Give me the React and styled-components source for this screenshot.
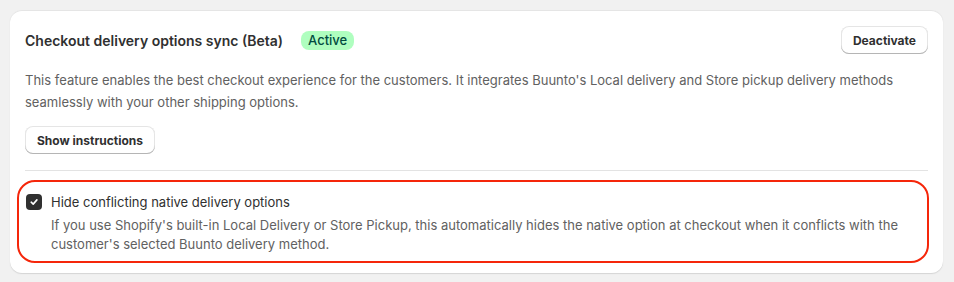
import styled, { createGlobalStyle } from "styled-components";

const GlobalStyle = createGlobalStyle`
  html, body {
    margin: 0;
    padding: 0;
    background: #f1f1f1;
    font-family: Inter, "Noto Sans", "Liberation Sans", sans-serif;
    -webkit-font-smoothing: antialiased;
  }
`;

const Page = styled.div`
  padding: 10px 11px 10px 10px;
`;

const Card = styled.div`
  background: #ffffff;
  border-radius: 12px;
  padding: 16px 15px 10px 15px;
  box-shadow: 0 1px 0 0 rgba(26, 26, 26, 0.07), 0 1px 2px rgba(0, 0, 0, 0.06),
    inset 0 1px 0 0 rgba(204, 204, 204, 0.5);
`;

const Header = styled.div`
  display: flex;
  align-items: center;
  justify-content: space-between;
`;

const TitleGroup = styled.div`
  display: flex;
  align-items: center;
  gap: 18px;
`;

const Title = styled.h2`
  margin: 0;
  font-size: 14px;
  font-weight: 600;
  color: #303030;
`;

const Badge = styled.span`
  display: inline-flex;
  align-items: center;
  height: 19px;
  padding: 0 7px;
  border-radius: 8px;
  background: #affebf;
  color: #014b40;
  font-size: 13px;
  font-weight: 450;
`;

const Button = styled.button`
  height: 28px;
  padding: 0 12px;
  border: none;
  border-radius: 8px;
  background: #ffffff;
  color: #303030;
  font-family: inherit;
  font-size: 12px;
  font-weight: 650;
  cursor: pointer;
  box-shadow: inset 0 -1px 0 0 #b5b5b5, inset 0 0 0 1px rgba(0, 0, 0, 0.1),
    inset 0 0.5px 0 1.5px #fff;
`;

const Description = styled.p`
  margin: 15px 0 13px;
  font-size: 13px;
  line-height: 22px;
  color: #616161;
`;

const Divider = styled.hr`
  margin: 16px 0 9px;
  border: none;
  border-top: 1px solid #e3e3e3;
`;

const Highlight = styled.div`
  margin: 0 -1px 0 -8px;
  padding: 11px 16px 7px 7px;
  border: 2px solid #f5260a;
  border-radius: 18px;
`;

const OptionRow = styled.label`
  display: grid;
  grid-template-columns: 16px 1fr;
  column-gap: 9px;
  align-items: center;
`;

const Box = styled.span`
  width: 16px;
  height: 16px;
  border-radius: 4px;
  background: #303030;
  display: flex;
  align-items: center;
  justify-content: center;
`;

const OptionLabel = styled.span`
  font-size: 13px;
  line-height: 18px;
  color: #303030;
`;

const HelpText = styled.p`
  grid-column: 2;
  margin: 5px 0 0;
  font-size: 13px;
  line-height: 19px;
  color: #616161;
`;

export default function App() {
  return (
    <>
      <GlobalStyle />
      <Page>
        <Card>
          <Header>
            <TitleGroup>
              <Title>Checkout delivery options sync (Beta)</Title>
              <Badge>Active</Badge>
            </TitleGroup>
            <Button>Deactivate</Button>
          </Header>
          <Description>
            This feature enables the best checkout experience for the customers. It integrates
            Buunto's Local delivery and Store pickup delivery methods seamlessly with your other
            shipping options.
          </Description>
          <Button>Show instructions</Button>
          <Divider />
          <Highlight>
            <OptionRow>
              <Box>
                <svg width="10" height="10" viewBox="0 0 10 10" fill="none">
                  <path
                    d="M2.2 5.2 L4.2 7.1 L7.9 2.9"
                    stroke="#fff"
                    strokeWidth="1.6"
                    strokeLinecap="round"
                    strokeLinejoin="round"
                  />
                </svg>
              </Box>
              <OptionLabel>Hide conflicting native delivery options</OptionLabel>
              <HelpText>
                If you use Shopify's built-in Local Delivery or Store Pickup, this automatically
                hides the native option at checkout when it conflicts with the customer's selected
                Buunto delivery method.
              </HelpText>
            </OptionRow>
          </Highlight>
        </Card>
      </Page>
    </>
  );
}
